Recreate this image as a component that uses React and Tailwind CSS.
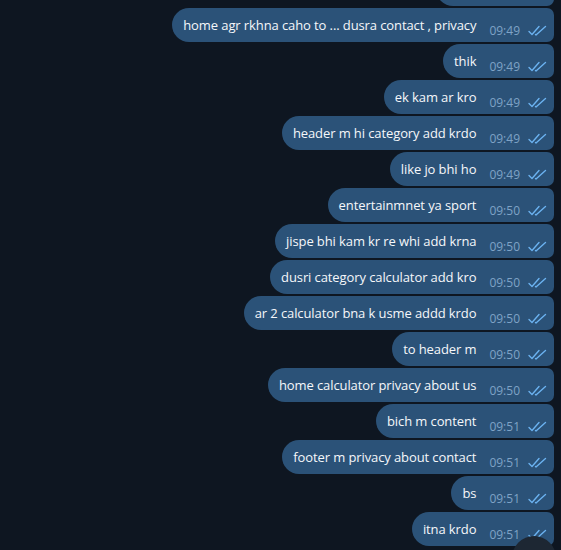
const MESSAGES = [
  ["home agr rkhna caho to ... dusra contact , privacy", "09:49"],
  ["thik", "09:49"],
  ["ek kam ar kro", "09:49"],
  ["header m hi category add krdo", "09:49"],
  ["like jo bhi ho", "09:49"],
  ["entertainmnet ya sport", "09:50"],
  ["jispe bhi kam kr re whi add krna", "09:50"],
  ["dusri category calculator add kro", "09:50"],
  ["ar 2 calculator bna k usme addd krdo", "09:50"],
  ["to header m", "09:50"],
  ["home calculator privacy about us", "09:50"],
  ["bich m content", "09:51"],
  ["footer m privacy about contact", "09:51"],
  ["bs", "09:51"],
  ["itna krdo", "09:51"],
];

function Ticks() {
  return (
    <svg width="19" height="11" viewBox="0 0 19 11" fill="none" stroke="#6bb2f0" strokeWidth="1.4" strokeLinecap="round" strokeLinejoin="round">
      <path d="M1 6.5 L4 9.5 L11 1.5" />
      <path d="M7.5 9.5 L8 9.9 L17.5 1.5" />
    </svg>
  );
}

function Bubble({ text, time }) {
  return (
    <div className="flex h-[34px] items-center rounded-l-[17px] rounded-r-[7px] bg-[#2b5278] pl-[11px] pr-[7px]">
      <span className="text-[13px] leading-none tracking-[-0.1px] text-[#f5f7fa]">{text}</span>
      <span className="ml-[13px] mt-[12px] text-[12px] leading-none text-[#7fa3c6]">{time}</span>
      <span className="ml-[8px] mt-[10px] flex">
        <Ticks />
      </span>
    </div>
  );
}

export default function App() {
  return (
    <div className="relative h-[550px] w-[561px] overflow-hidden bg-[#0e1621]" style={{ fontFamily: '"Open Sans", sans-serif' }}>
      <div className="flex flex-col items-end gap-[2px] pr-[7px]">
        <div className="-mt-[28px] h-[34px] w-[118px] rounded-l-[17px] rounded-r-[7px] bg-[#2b5278]" />
        {MESSAGES.map(([t, tm], i) => (
          <Bubble key={i} text={t} time={tm} />
        ))}
      </div>
      <div className="absolute left-[512px] top-[536px] h-[44px] w-[44px] rounded-full bg-[#1d2733]" />
    </div>
  );
}
